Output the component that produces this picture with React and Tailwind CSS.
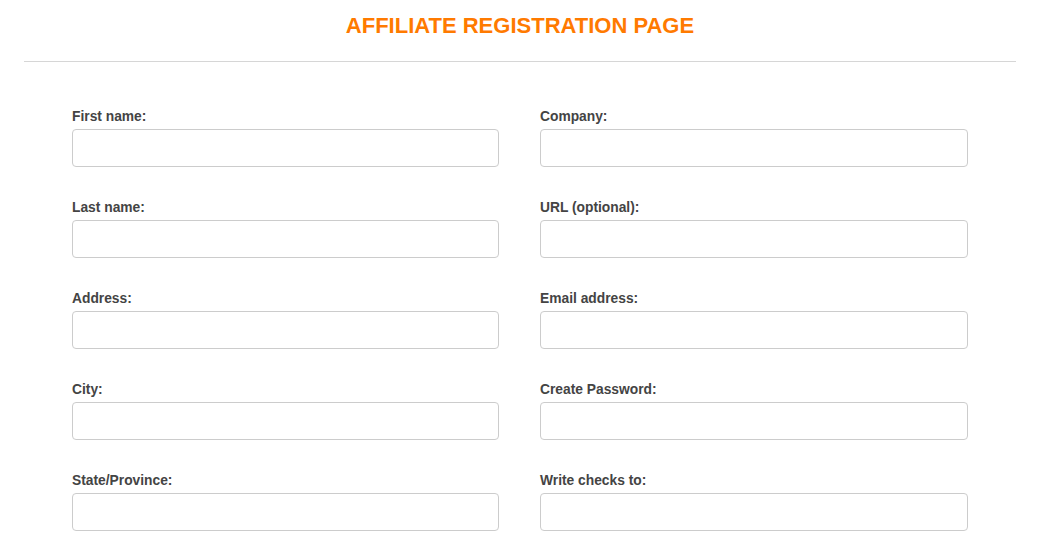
import React from "react";

const fields = [
  ["First name:", "Company:"],
  ["Last name:", "URL (optional):"],
  ["Address:", "Email address:"],
  ["City:", "Create Password:"],
  ["State/Province:", "Write checks to:"],
];

function Field({ label, type = "text" }) {
  return (
    <div className="flex flex-col">
      <label className="text-[13.8px] leading-[20px] font-bold text-[#444] mb-[2px]">{label}</label>
      <input
        type={type}
        className="h-[38px] w-full border border-[#ccc] rounded-[4px] bg-white px-3 text-sm outline-none"
      />
    </div>
  );
}

export default function App() {
  return (
    <div className="min-h-[550px] bg-white font-['Liberation_Sans',Arial,sans-serif]">
      <div className="w-[992px] ml-[24px]">
        {/* Header */}
        <header className="border-b border-[#d6d6d6] pt-[13px] pb-[22px]">
          <h1 className="text-center text-[22px] leading-[26px] font-bold text-[#ff7a00]">
            AFFILIATE REGISTRATION PAGE
          </h1>
        </header>

        {/* Form */}
        <form className="px-[48px] pt-[45px] grid grid-cols-[427px_428px] gap-x-[41px] gap-y-[31px]">
          {fields.map(([left, right]) => (
            <React.Fragment key={left}>
              <Field label={left} />
              <Field label={right} type={right === "Create Password:" ? "password" : "text"} />
            </React.Fragment>
          ))}
        </form>
      </div>
    </div>
  );
}
